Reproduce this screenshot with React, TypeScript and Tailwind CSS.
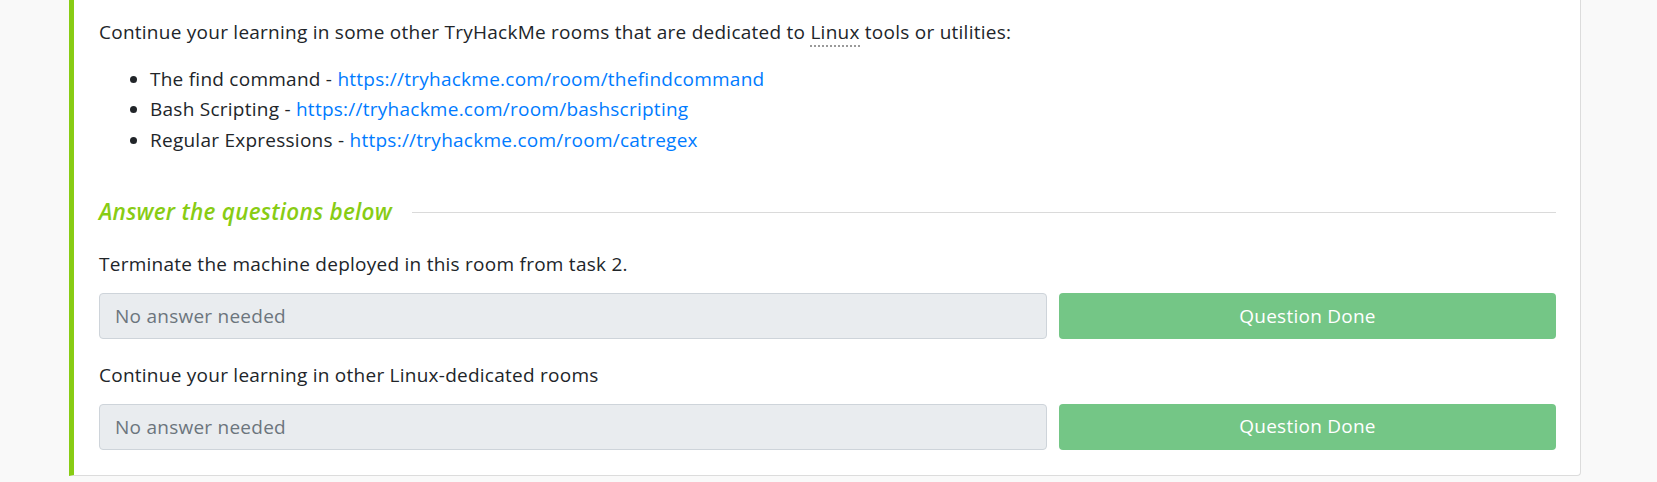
import React from 'react';

const rooms = [
  { name: 'The find command', url: 'https://tryhackme.com/room/thefindcommand' },
  { name: 'Bash Scripting', url: 'https://tryhackme.com/room/bashscripting' },
  { name: 'Regular Expressions', url: 'https://tryhackme.com/room/catregex' },
];

const questions = [
  'Terminate the machine deployed in this room from task 2.',
  'Continue your learning in other Linux-dedicated rooms',
];

export default function App() {
  return (
    <div className="min-h-screen bg-[#f9f9f9] font-['Open_Sans','Noto_Sans',sans-serif] text-[#212529] tracking-[0.25px]">
      <div className="ml-[69px] w-[1512px] bg-white border border-t-0 border-[#dcdcdc] border-l-[5px] border-l-[#88cc14] rounded-br pl-[25px] pr-[24px] pt-[17px] pb-[25px]">
        <p className="text-[19px] leading-[30.6px] mb-4">
          Continue your learning in some other TryHackMe rooms that are dedicated to{' '}
          <abbr className="no-underline border-b-2 border-dotted border-[#9a9a9a]">Linux</abbr> tools or utilities:
        </p>

        {/* Rooms */}
        <ul className="list-disc pl-[51px] text-[19px] leading-[30.6px] mb-[42px]">
          {rooms.map((room) => (
            <li key={room.url}>
              {room.name} -{' '}
              <a href={room.url} className="text-[#007bff]">
                {room.url}
              </a>
            </li>
          ))}
        </ul>

        {/* Answer the questions below */}
        <div className="flex items-center gap-5 mb-[22px]">
          <h5 className="text-[22.5px] leading-[30px] italic font-semibold text-[#88cc14] whitespace-nowrap">
            Answer the questions below
          </h5>
          <div className="flex-1 h-px bg-[#dadada]" />
        </div>

        <div className="space-y-[21px]">
          {questions.map((q) => (
            <div key={q}>
              <p className="text-[19px] leading-[30.6px] mb-[13px]">{q}</p>
              <div className="grid grid-cols-[1fr_497px] gap-3">
                <input
                  type="text"
                  disabled
                  placeholder="No answer needed"
                  className="h-[46px] px-[15px] bg-[#e9ecef] border border-[#ced4da] rounded text-[19px] placeholder:text-[#6c757d]"
                />
                <button
                  type="button"
                  disabled
                  className="h-[46px] rounded bg-[#74c686] text-white text-[19px] font-medium"
                >
                  Question Done
                </button>
              </div>
            </div>
          ))}
        </div>
      </div>
    </div>
  );
}
